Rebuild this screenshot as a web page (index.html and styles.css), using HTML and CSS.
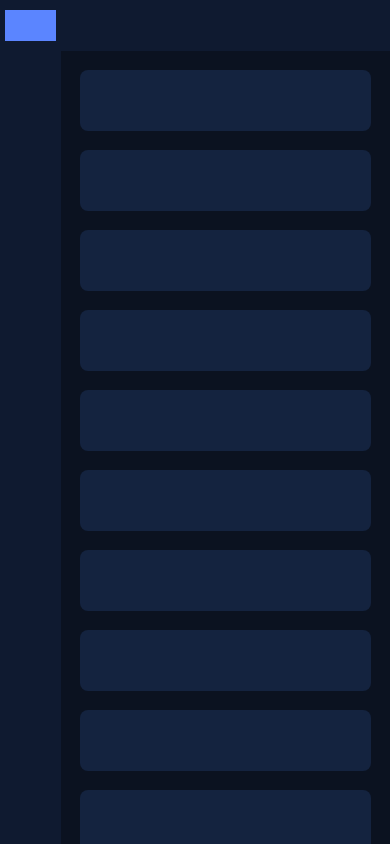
FILE: index.html
```html
<!DOCTYPE html>
<html lang="en">
<head>
    <meta charset="UTF-8">
    <meta name="viewport" content="width=device-width, initial-scale=1.0">
    <title>Dashboard</title>
    <link rel="stylesheet" href="styles.css">
</head>
<body>
    <div class="top-bar">
        <div class="logo_box"></div>
    </div>
    <div class="layout">
        <div class="side-bar"></div>
        <div class="content">
            <div class="card"></div>
            <div class="card"></div>
            <div class="card"></div>
            <div class="card"></div>
            <div class="card"></div>
            <div class="card"></div>
            <div class="card"></div>
            <div class="card"></div>
            <div class="card"></div>
            <div class="card"></div>
            <div class="card"></div>
            <div class="card"></div>
        </div>
    </div>
</body>
</html>
```

FILE: styles.css
```css
body {
    margin: 0;
    padding: 0;
    background-color: #0b1220;
    font-family: "Liberation Sans", Arial, sans-serif;
    height: 844px;
    overflow: hidden;
}
.top-bar {
    height: 51px;
    background-color: #0f1a30;
    padding: 10px 0 0 5px;
    box-sizing: border-box;
}
.logo_box {
    width: 51px;
    height: 31px;
    background-color: #5b85ff;
}
.layout {
    display: flex;
    height: 793px;
}
.side-bar {
    width: 61px;
    flex-shrink: 0;
    background-color: #0f1a30;
}
.content {
    flex: 1;
    padding: 19px;
    display: flex;
    flex-direction: column;
    gap: 19px;
    overflow: hidden;
}
.card {
    height: 61px;
    flex-shrink: 0;
    border-radius: 8px;
    background-color: #14233f;
}
```
